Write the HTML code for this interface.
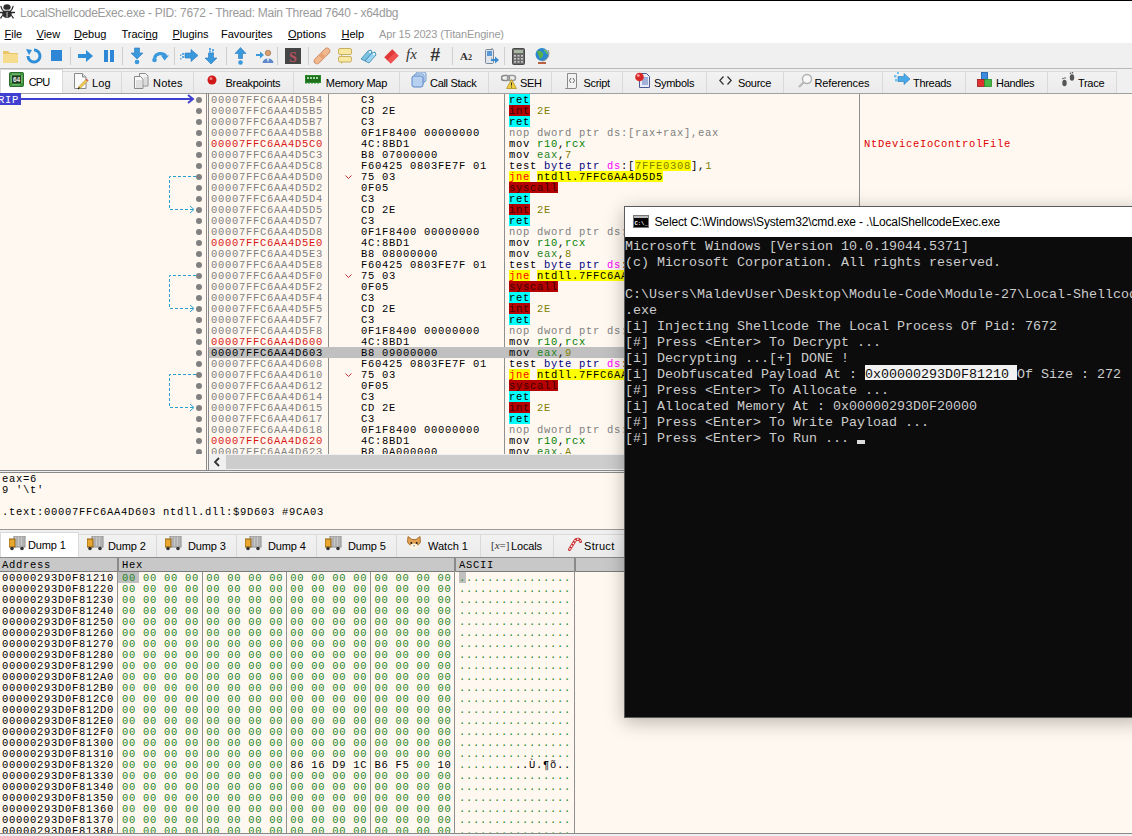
<!DOCTYPE html><html><head><meta charset="utf-8"><style>
*{box-sizing:border-box}
html,body{margin:0;padding:0}
body{width:1132px;height:836px;overflow:hidden;position:relative;background:#f0f0f0;font-family:'Liberation Sans', sans-serif;}
.a{position:absolute}
.m{font-family:'Liberation Mono', monospace;font-size:10.5px;letter-spacing:0.7px;white-space:pre;line-height:11px}
.s{font-family:'Liberation Sans', sans-serif;white-space:pre}
.u{text-decoration:underline}
.tab{position:absolute;top:71px;height:22px;border:1px solid #d9d9d9;border-bottom:none;background:linear-gradient(#f2f2f2,#ebebeb);font-size:11px;line-height:20px;white-space:pre;color:#000}
.tab.sel{top:69px;height:24px;background:#fff;border-color:#d9d9d9}
.tsep{position:absolute;width:1px;background:#ccc}
</style></head><body>
<div class="a" style="left:0;top:0;width:1132px;height:43px;background:#fff"></div>
<div class="a" style="left:0;top:0;width:1132px;height:1px;background:#000"></div>
<svg class="a" style="left:0;top:0" width="16" height="20" viewBox="0 0 16 20">
<g stroke="#2a2a2a" stroke-width="1.3" fill="none" stroke-linecap="round"><path d="M3.5 11 Q1.5 9.5 1 6.5 M10.5 11 Q12.5 9.5 13 6.5 M0.5 12.5 H14.5 M3.5 15 Q1.5 16 0.8 18 M10.5 15 Q12.5 16 13.2 18"/></g>
<g fill="#2e2e2e"><ellipse cx="7" cy="7.2" rx="3.6" ry="3"/><ellipse cx="7" cy="13.8" rx="4.8" ry="4.3"/></g>
<path d="M3.8 10.2 H10.2" stroke="#fff" stroke-width="0.9"/><rect x="6.4" y="12" width="1.3" height="5.6" fill="#a8a8a8"/></svg>
<div class="a s" style="left:20px;top:4px;font-size:12px;line-height:18px;color:#9a9a9a;letter-spacing:-0.27px">LocalShellcodeExec.exe - PID: 7672 - Thread: Main Thread 7640 - x64dbg</div>
<div class="a s" style="left:4.5px;top:27px;font-size:11px;line-height:14px;color:#000"><span class=u>F</span>ile</div>
<div class="a s" style="left:36.5px;top:27px;font-size:11px;line-height:14px;color:#000"><span class=u>V</span>iew</div>
<div class="a s" style="left:74px;top:27px;font-size:11px;line-height:14px;color:#000"><span class=u>D</span>ebug</div>
<div class="a s" style="left:121.5px;top:27px;font-size:11px;line-height:14px;color:#000">Traci<span class=u>n</span>g</div>
<div class="a s" style="left:172.5px;top:27px;font-size:11px;line-height:14px;color:#000"><span class=u>P</span>lugins</div>
<div class="a s" style="left:221px;top:27px;font-size:11px;line-height:14px;color:#000">Favour<span class=u>i</span>tes</div>
<div class="a s" style="left:288px;top:27px;font-size:11px;line-height:14px;color:#000"><span class=u>O</span>ptions</div>
<div class="a s" style="left:341.5px;top:27px;font-size:11px;line-height:14px;color:#000"><span class=u>H</span>elp</div>
<div class="a s" style="left:379px;top:27px;font-size:11px;line-height:14px;color:#9a9a9a;letter-spacing:-0.15px">Apr 15 2023 (TitanEngine)</div>
<div class="a" style="left:0;top:43px;width:1132px;height:25px;background:#f0f0f0"></div>
<div class="a" style="left:0;top:68px;width:1132px;height:1px;background:#b9b9b9"></div>
<div class="a" style="left:70px;top:47px;width:1px;height:18px;background:#cfcfcf"></div>
<div class="a" style="left:122px;top:47px;width:1px;height:18px;background:#cfcfcf"></div>
<div class="a" style="left:174px;top:47px;width:1px;height:18px;background:#cfcfcf"></div>
<div class="a" style="left:226px;top:47px;width:1px;height:18px;background:#cfcfcf"></div>
<div class="a" style="left:277px;top:47px;width:1px;height:18px;background:#cfcfcf"></div>
<div class="a" style="left:308px;top:47px;width:1px;height:18px;background:#cfcfcf"></div>
<div class="a" style="left:452px;top:47px;width:1px;height:18px;background:#cfcfcf"></div>
<div class="a" style="left:504px;top:47px;width:1px;height:18px;background:#cfcfcf"></div>
<svg class="a" style="left:2px;top:47px" width="18" height="18" viewBox="0 0 18 18"><path d="M1 4h5l2 2h8v10H1z" fill="#e8c66a"/><path d="M1 7h15v9H1z" fill="#f6dc8e"/></svg>
<svg class="a" style="left:25px;top:47px" width="18" height="18" viewBox="0 0 18 18"><path d="M9 3a6 6 0 1 1-6 6" stroke="#2e8fd8" stroke-width="3" fill="none"/><path d="M1 2l6 1-3 5z" fill="#2e8fd8"/></svg>
<svg class="a" style="left:49px;top:47px" width="18" height="18" viewBox="0 0 18 18"><rect x="2" y="3" width="11" height="11" fill="#2d86d6"/></svg>
<svg class="a" style="left:77px;top:47px" width="18" height="18" viewBox="0 0 18 18"><path d="M1 7h8V3l7 6-7 6v-4H1z" fill="#2e8fd8"/></svg>
<svg class="a" style="left:102px;top:47px" width="18" height="18" viewBox="0 0 18 18"><rect x="2" y="3" width="4" height="12" fill="#2d86d6"/><rect x="8" y="3" width="4" height="12" fill="#2d86d6"/></svg>
<svg class="a" style="left:130px;top:47px" width="18" height="18" viewBox="0 0 18 18"><path d="M4.5 1h5v5h3.5l-6 6-6-6h3.5z" fill="#3a98dc" stroke="#2a78bc" stroke-width="0.6"/><circle cx="7" cy="15" r="2.3" fill="#3a98dc"/></svg>
<svg class="a" style="left:151px;top:47px" width="18" height="18" viewBox="0 0 18 18"><path d="M3.5 11a6.5 6 0 0 1 11.5-2" stroke="#3a98dc" stroke-width="3.2" fill="none"/><path d="M10 8.5h8l-4.5 5z" fill="#3a98dc"/><circle cx="3.5" cy="13" r="2.3" fill="#3a98dc"/></svg>
<svg class="a" style="left:180px;top:47px" width="18" height="18" viewBox="0 0 18 18"><path d="M5 6h6V2.5l7 6-7 6V11H5z" fill="#3a98dc" stroke="#2a78bc" stroke-width="0.6"/><g fill="#5aa8e4"><rect x="2" y="6" width="2" height="2"/><rect x="2" y="9" width="2" height="2"/><rect x="0" y="7.5" width="1.5" height="1.5"/><rect x="0" y="11" width="1.5" height="1.5"/></g></svg>
<svg class="a" style="left:204px;top:47px" width="16" height="18" viewBox="0 0 16 18"><path d="M4.5 6h5v5h3.5l-6 6-6-6h3.5z" fill="#3a98dc" stroke="#2a78bc" stroke-width="0.6"/><g fill="#5aa8e4"><rect x="5" y="1" width="2" height="2"/><rect x="8" y="2" width="2" height="2"/><rect x="5" y="3.5" width="2" height="2"/><rect x="8" y="4.5" width="1.5" height="1.5"/></g></svg>
<svg class="a" style="left:234px;top:47px" width="14" height="18" viewBox="0 0 14 18"><path d="M4 11h4V6h3.5l-5.5-6-5.5 6H4z" transform="translate(0.5,0.5)" fill="#3a98dc" stroke="#2a78bc" stroke-width="0.6"/><circle cx="6.5" cy="15.5" r="2.3" fill="#3a98dc"/></svg>
<svg class="a" style="left:256px;top:47px" width="18" height="18" viewBox="0 0 18 18"><path d="M0 7h4V4.5l4 3.5-4 3.5V9H0z" fill="#3a98dc"/><circle cx="12" cy="6" r="2.8" fill="#d8a070" stroke="#8a5a30" stroke-width="0.5"/><path d="M6.5 16a5.5 4.5 0 0 1 11 0z" fill="#5a88c8"/><path d="M11 11.5h2l-1 4z" fill="#fff"/></svg>
<svg class="a" style="left:285px;top:48px" width="16" height="16" viewBox="0 0 16 16"><rect x="0" y="0" width="16" height="16" fill="#454545"/><text x="8" y="13.5" font-family="Liberation Serif" font-size="14" font-weight="bold" fill="#b85060" text-anchor="middle">S</text></svg>
<svg class="a" style="left:313px;top:47px" width="18" height="18" viewBox="0 0 18 18"><path d="M4 14L14 4" stroke="#c88a60" stroke-width="6.5" stroke-linecap="round"/><path d="M4 14L14 4" stroke="#f2b890" stroke-width="5" stroke-linecap="round"/><rect x="7" y="7" width="4" height="4" transform="rotate(-45 9 9)" fill="#e8a070"/></svg>
<svg class="a" style="left:337px;top:47px" width="16" height="18" viewBox="0 0 16 18"><rect x="1.5" y="1.5" width="13" height="6" rx="1.5" fill="#f8e8a0" stroke="#c8b060"/><rect x="1.5" y="9.5" width="13" height="5.5" rx="1.5" fill="#f8e8a0" stroke="#c8b060"/><path d="M4 7.5v2l2-2z" fill="#c8b060"/><path d="M4 15v2l2-2z" fill="#c8b060"/></svg>
<svg class="a" style="left:360px;top:47px" width="17" height="18" viewBox="0 0 17 18"><path d="M1 12l7-8 3-1 1 3-7 8z" fill="#7ac0e0" stroke="#3a88b0" stroke-width="0.8"/><path d="M5 14l7-8 3-1 1 3-7 8z" fill="#9ad4f0" stroke="#3a88b0" stroke-width="0.8"/><circle cx="10" cy="5" r="1" fill="#fff"/><circle cx="14" cy="7" r="1" fill="#fff"/></svg>
<svg class="a" style="left:383px;top:47px" width="17" height="18" viewBox="0 0 17 18"><path d="M3 12L11 4" stroke="#e03838" stroke-width="5"/><path d="M6 15L14 7" stroke="#f05050" stroke-width="5"/><path d="M0.5 11.5l3 3-3 0z M3.5 14.5l3 3-3 0z" fill="#f8f0f0"/></svg>
<div class="a" style="left:406px;top:47px;font-family:'Liberation Serif';font-style:italic;font-size:15px;line-height:15px;color:#333">fx</div>
<div class="a" style="left:430px;top:46px;font-family:'Liberation Sans';font-weight:bold;font-style:italic;font-size:18px;line-height:18px;color:#333">#</div>
<div class="a" style="left:460px;top:50px;font-family:'Liberation Serif';font-weight:bold;font-size:11px;line-height:12px;color:#333">A<span style="font-size:8px">2</span></div>
<svg class="a" style="left:484px;top:47px" width="16" height="18" viewBox="0 0 16 18"><rect x="1.5" y="2.5" width="8" height="14" rx="1" fill="#dfe4ea" stroke="#7a8a9a"/><rect x="3" y="4" width="5" height="5" fill="#5a98d8"/><path d="M8 11h-1" stroke="#888"/><path d="M8 1v2" stroke="#7a8a9a"/><path d="M7 12h4v-2.5l4 3.5-4 3.5V14H7z" fill="#3a8ad0"/></svg>
<svg class="a" style="left:512px;top:48px" width="13" height="17" viewBox="0 0 13 17"><rect x="0.5" y="0.5" width="12" height="16" rx="1" fill="#6a6a6a" stroke="#4a4a4a"/><rect x="2" y="2" width="9" height="3" fill="#a8b8a0"/><g fill="#c8c8c8"><rect x="2" y="7" width="2" height="1.6"/><rect x="5.5" y="7" width="2" height="1.6"/><rect x="9" y="7" width="2" height="1.6"/><rect x="2" y="10" width="2" height="1.6"/><rect x="5.5" y="10" width="2" height="1.6"/><rect x="9" y="10" width="2" height="1.6"/><rect x="2" y="13" width="2" height="1.6"/><rect x="5.5" y="13" width="2" height="1.6"/><rect x="9" y="13" width="2" height="1.6"/></g></svg>
<svg class="a" style="left:534px;top:47px" width="16" height="18" viewBox="0 0 16 18"><circle cx="8" cy="7.5" r="6.5" fill="#2a88d0"/><path d="M3 4q3-1 5 1t1 4-3 3" fill="#5ab050"/><path d="M10 3q3 1 3 4" stroke="#6ac060" stroke-width="1.5" fill="none"/><path d="M14 3a7.5 7.5 0 0 1-6 11" stroke="#888" fill="none"/><path d="M4 16h8" stroke="#b86040" stroke-width="2"/></svg>
<div class="a" style="left:0;top:69px;width:1132px;height:24px;background:#f0f0f0"></div>
<div class="tab sel" style="left:0px;width:63px"></div>
<div class="tab" style="left:62px;width:60px"></div>
<div class="tab" style="left:121px;width:73px"></div>
<div class="tab" style="left:193px;width:101px"></div>
<div class="tab" style="left:293px;width:107px"></div>
<div class="tab" style="left:399px;width:90px"></div>
<div class="tab" style="left:488px;width:64px"></div>
<div class="tab" style="left:551px;width:72px"></div>
<div class="tab" style="left:622px;width:85px"></div>
<div class="tab" style="left:706px;width:78px"></div>
<div class="tab" style="left:783px;width:100px"></div>
<div class="tab" style="left:882px;width:84px"></div>
<div class="tab" style="left:965px;width:83px"></div>
<div class="tab" style="left:1047px;width:70px"></div>
<div class="a s" style="left:28.8px;top:75px;font-size:11px;line-height:14px;color:#000;letter-spacing:-0.9px">CPU</div>
<div class="a s" style="left:92px;top:76px;font-size:11px;line-height:14px;color:#000;letter-spacing:0.1px">Log</div>
<div class="a s" style="left:153px;top:76px;font-size:11px;line-height:14px;color:#000;letter-spacing:0.2px">Notes</div>
<div class="a s" style="left:225.5px;top:76px;font-size:11px;line-height:14px;color:#000;letter-spacing:-0.3px">Breakpoints</div>
<div class="a s" style="left:325.8px;top:76px;font-size:11px;line-height:14px;color:#000;letter-spacing:-0.3px">Memory Map</div>
<div class="a s" style="left:430px;top:76px;font-size:11px;line-height:14px;color:#000;letter-spacing:-0.3px">Call Stack</div>
<div class="a s" style="left:520px;top:76px;font-size:11px;line-height:14px;color:#000;letter-spacing:-0.3px">SEH</div>
<div class="a s" style="left:583.5px;top:76px;font-size:11px;line-height:14px;color:#000;letter-spacing:-0.3px">Script</div>
<div class="a s" style="left:654px;top:76px;font-size:11px;line-height:14px;color:#000;letter-spacing:-0.3px">Symbols</div>
<div class="a s" style="left:738px;top:76px;font-size:11px;line-height:14px;color:#000;letter-spacing:-0.3px">Source</div>
<div class="a s" style="left:814.5px;top:76px;font-size:11px;line-height:14px;color:#000;letter-spacing:-0.15px">References</div>
<div class="a s" style="left:913px;top:76px;font-size:11px;line-height:14px;color:#000;letter-spacing:-0.3px">Threads</div>
<div class="a s" style="left:996px;top:76px;font-size:11px;line-height:14px;color:#000;letter-spacing:-0.3px">Handles</div>
<div class="a s" style="left:1078px;top:76px;font-size:11px;line-height:14px;color:#000;letter-spacing:-0.3px">Trace</div>
<svg class="a" style="left:9px;top:72px" width="15" height="15" viewBox="0 0 15 15"><rect x="0.5" y="0.5" width="14" height="14" rx="1" fill="#3c963c" stroke="#2a6a2a"/><g stroke="#bde0bd" stroke-width="0.8"><path d="M4 1.5v1.5M6 1.5v1.5M8 1.5v1.5M10 1.5v1.5M4 12v1.5M6 12v1.5M8 12v1.5M10 12v1.5M1.5 4h1.5M1.5 6h1.5M1.5 8h1.5M1.5 10h1.5M12 4h1.5M12 6h1.5M12 8h1.5M12 10h1.5"/></g><rect x="3" y="3.5" width="9" height="8" fill="#1e3c1e"/><text x="7.5" y="10.3" font-family="Liberation Sans" font-weight="bold" font-size="6.5" fill="#f0f0f0" text-anchor="middle">64</text></svg>
<svg class="a" style="left:74px;top:73px" width="15" height="17" viewBox="0 0 15 17"><path d="M0.5 0.5h8l3.5 3.5v11.5H0.5z" fill="#fafafa" stroke="#8a8a8a"/><path d="M8.5 0.5v3.5h3.5" fill="#e0e0e0" stroke="#8a8a8a"/><path d="M5 15L13 7" stroke="#c89a30" stroke-width="2.6"/><path d="M5 15L13 7" stroke="#f4d860" stroke-width="1.4"/><path d="M12 6l2 2" stroke="#d06060" stroke-width="1.6"/><path d="M4 16l1.5-1.5" stroke="#222" stroke-width="1.2"/></svg>
<svg class="a" style="left:134px;top:73px" width="15" height="16" viewBox="0 0 15 16"><path d="M5.5 0.5h6l2.5 2.5v10H5.5z" fill="#f4f4f4" stroke="#8a8a8a"/><path d="M0.5 3.5h6l2.5 2.5v9.5H0.5z" fill="#f8f8f8" stroke="#8a8a8a"/><path d="M2 8h6M2 10h6M2 12h6M2 14h6M10 5h3M10 7h3M10 9h3M10 11h3" stroke="#b8b8b8" stroke-width="0.8"/></svg>
<svg class="a" style="left:207px;top:75px" width="10" height="10" viewBox="0 0 10 10"><circle cx="5" cy="5" r="4.5" fill="#d01818"/><circle cx="4" cy="3.5" r="1.5" fill="#f08080"/></svg>
<svg class="a" style="left:305px;top:75px" width="16" height="10" viewBox="0 0 16 10"><rect x="0.5" y="0.5" width="15" height="7" fill="#1e6e1e" stroke="#2a8a2a"/><g fill="#9ed89e"><rect x="2" y="2" width="2" height="2"/><rect x="5" y="2" width="2" height="2"/><rect x="8" y="2" width="2" height="2"/><rect x="11" y="2" width="2" height="2"/></g><path d="M1 8v1M4 8v1M7 8v1M10 8v1M13 8v1" stroke="#2a8a2a"/></svg>
<svg class="a" style="left:411px;top:72px" width="16" height="16" viewBox="0 0 16 16"><rect x="5" y="0" width="10" height="10" rx="2" fill="#cfe0f4" stroke="#7aa0d0"/><rect x="3" y="2" width="10" height="10" rx="2" fill="#cfe0f4" stroke="#7aa0d0"/><rect x="1" y="4" width="11" height="11" rx="2" fill="#b8d0f0" stroke="#5a88c8"/></svg>
<svg class="a" style="left:501px;top:74px" width="17" height="16" viewBox="0 0 17 16"><rect x="0.5" y="1.5" width="8" height="5" rx="2.5" fill="none" stroke="#8a8a8a" stroke-width="1.6"/><rect x="6.5" y="1.5" width="8" height="5" rx="2.5" fill="none" stroke="#9a9a9a" stroke-width="1.6"/><path d="M10.5 5.5l5 9h-10z" fill="#f0d040" stroke="#b09020" stroke-width="0.8"/><path d="M10.5 8.5v3M10.5 12.5v1" stroke="#333" stroke-width="1"/></svg>
<svg class="a" style="left:565px;top:73px" width="13" height="16" viewBox="0 0 13 16"><path d="M2.5 0.5h9v13.5a1.5 1.5 0 0 1-1.5 1.5H0.5a1.5 1.5 0 0 0 2-1.5z" fill="#f2f2f2" stroke="#8a8a8a"/><path d="M6 5L4.5 7.5L6 10M8 5L9.5 7.5L8 10" stroke="#555" stroke-width="0.9" fill="none"/></svg>
<svg class="a" style="left:635px;top:72px" width="16" height="17" viewBox="0 0 16 17"><path d="M4.5 1.5h7l3 3v11h-10z" fill="#e8ecf8" stroke="#4a5a90"/><path d="M7 6h6M7 8h6M7 10h6M7 12h6" stroke="#4a6ab0" stroke-width="0.9"/><circle cx="4.5" cy="5" r="4.3" fill="#d82828"/><circle cx="3.3" cy="3.6" r="1.4" fill="#f8a0a0"/></svg>
<svg class="a" style="left:719px;top:76px" width="13" height="9" viewBox="0 0 13 9"><path d="M4.5 0.5L0.8 4.5L4.5 8.5M8.5 0.5L12.2 4.5L8.5 8.5" stroke="#333" stroke-width="1.3" fill="none"/></svg>
<svg class="a" style="left:797px;top:73px" width="16" height="16" viewBox="0 0 16 16"><circle cx="10" cy="6" r="4.5" fill="#f8f8f8" stroke="#b0b0b0" stroke-width="1.4"/><path d="M7 9l-5 5" stroke="#b8b8b8" stroke-width="2.2"/></svg>
<svg class="a" style="left:894px;top:72px" width="17" height="14" viewBox="0 0 17 14"><path d="M4 4.5h6V1.5l6 5.5-6 5.5V9.5H4z" fill="#48a8e8" stroke="#2a78b8" stroke-width="0.6"/><g fill="#70c0f0"><rect x="0" y="3" width="2.5" height="2.5"/><rect x="1" y="7" width="2.5" height="2.5"/><rect x="3" y="0" width="2" height="2"/></g></svg>
<svg class="a" style="left:977px;top:72px" width="15" height="15" viewBox="0 0 15 15"><rect x="4.5" y="0.5" width="6" height="7" fill="#3a8ae0" stroke="#1a5aa0" stroke-width="0.8"/><rect x="0.5" y="7.5" width="7" height="7" fill="#e03030" stroke="#a01818" stroke-width="0.8"/><rect x="7.5" y="7.5" width="7" height="7" fill="#48b848" stroke="#288a28" stroke-width="0.8"/></svg>
<svg class="a" style="left:1061px;top:72px" width="15" height="16" viewBox="0 0 15 16"><ellipse cx="3.5" cy="11" rx="2.2" ry="3.2" fill="#555"/><ellipse cx="11" cy="5.5" rx="2.2" ry="3.2" fill="#555"/><g fill="#555"><circle cx="2" cy="6.5" r="0.8"/><circle cx="4" cy="6" r="0.8"/><circle cx="9.5" cy="1.2" r="0.8"/><circle cx="11.5" cy="0.8" r="0.8"/></g></svg>
<div class="a" style="left:0;top:93px;width:1132px;height:378px;background:#fff8f0"></div>
<div class="a" style="left:0;top:93px;width:1132px;height:1px;background:#a0a0a0"></div>
<div class="a" style="left:206px;top:93px;width:1px;height:378px;background:#8a8a8a"></div>
<div class="a" style="left:208px;top:93px;width:1px;height:378px;background:#8a8a8a"></div>
<div class="a" style="left:328px;top:94px;width:1px;height:360px;background:#8f8f8f"></div>
<div class="a" style="left:504px;top:94px;width:1px;height:360px;background:#8f8f8f"></div>
<div class="a" style="left:859px;top:94px;width:1px;height:360px;background:#8f8f8f"></div>
<div class="a" style="left:0;top:94px;width:1132px;height:360px;overflow:hidden">
<div class="a m" style="left:211px;top:1px;color:#808080">00007FFC6AA4D5B4</div>
<div class="a m" style="left:361px;top:1px;color:#000">C3</div>
<div class="a m" style="left:509px;top:1px"><span style="color:#000;background:#00ffff;display:inline-block;height:11px;vertical-align:top;position:relative;top:-1px;padding-top:1px">ret</span></div>
<div class="a" style="left:196px;top:2.5px;width:6px;height:6px;border-radius:50%;background:#808080"></div>
<div class="a m" style="left:211px;top:12px;color:#808080">00007FFC6AA4D5B5</div>
<div class="a m" style="left:361px;top:12px;color:#000">CD 2E</div>
<div class="a m" style="left:509px;top:12px"><span style="color:#400000;background:#b40000;display:inline-block;height:11px;vertical-align:top;position:relative;top:-1px;padding-top:1px">int</span><span style="color:#808000"> 2E</span></div>
<div class="a" style="left:196px;top:13.5px;width:6px;height:6px;border-radius:50%;background:#808080"></div>
<div class="a m" style="left:211px;top:23px;color:#808080">00007FFC6AA4D5B7</div>
<div class="a m" style="left:361px;top:23px;color:#000">C3</div>
<div class="a m" style="left:509px;top:23px"><span style="color:#000;background:#00ffff;display:inline-block;height:11px;vertical-align:top;position:relative;top:-1px;padding-top:1px">ret</span></div>
<div class="a" style="left:196px;top:24.5px;width:6px;height:6px;border-radius:50%;background:#808080"></div>
<div class="a m" style="left:211px;top:34px;color:#808080">00007FFC6AA4D5B8</div>
<div class="a m" style="left:361px;top:34px;color:#000">0F1F8400 00000000</div>
<div class="a m" style="left:509px;top:34px"><span style="color:#808080">nop dword ptr ds:[rax+rax],eax</span></div>
<div class="a" style="left:196px;top:35.5px;width:6px;height:6px;border-radius:50%;background:#808080"></div>
<div class="a m" style="left:211px;top:45px;color:#d81818">00007FFC6AA4D5C0</div>
<div class="a m" style="left:361px;top:45px;color:#000">4C:8BD1</div>
<div class="a m" style="left:509px;top:45px"><span style="color:#000">mov </span><span style="color:#008000">r10</span><span style="color:#000">,</span><span style="color:#008000">rcx</span></div>
<div class="a" style="left:196px;top:46.5px;width:6px;height:6px;border-radius:50%;background:#808080"></div>
<div class="a m" style="left:211px;top:56px;color:#808080">00007FFC6AA4D5C3</div>
<div class="a m" style="left:361px;top:56px;color:#000">B8 07000000</div>
<div class="a m" style="left:509px;top:56px"><span style="color:#000">mov </span><span style="color:#1f851f">eax</span><span style="color:#000">,</span><span style="color:#808000">7</span></div>
<div class="a" style="left:196px;top:57.5px;width:6px;height:6px;border-radius:50%;background:#808080"></div>
<div class="a m" style="left:211px;top:67px;color:#808080">00007FFC6AA4D5C8</div>
<div class="a m" style="left:361px;top:67px;color:#000">F60425 0803FE7F 01</div>
<div class="a m" style="left:509px;top:67px"><span style="color:#000">test </span><span style="color:#000080">byte ptr </span><span style="color:#ff00ff">ds</span><span style="color:#000">:</span><span style="color:#000">[</span><span style="color:#808000;background:#ffff00;display:inline-block;height:11px;vertical-align:top;position:relative;top:-1px;padding-top:1px">7FFE0308</span><span style="color:#000">]</span><span style="color:#000">,</span><span style="color:#808000">1</span></div>
<div class="a" style="left:196px;top:68.5px;width:6px;height:6px;border-radius:50%;background:#808080"></div>
<div class="a m" style="left:211px;top:78px;color:#808080">00007FFC6AA4D5D0</div>
<div class="a m" style="left:361px;top:78px;color:#000">75 03</div>
<svg class="a" style="left:345px;top:81px" width="7" height="5"><path d="M0.5 0.5 L3.5 3.5 L6.5 0.5" stroke="#c03030" fill="none"/></svg>
<div class="a m" style="left:509px;top:78px"><span style="color:#ff0000;background:#ffff00;display:inline-block;height:11px;vertical-align:top;position:relative;top:-1px;padding-top:1px">jne</span> <span style="color:#000;background:#ffff00;display:inline-block;height:11px;vertical-align:top;position:relative;top:-1px;padding-top:1px">ntdll.7FFC6AA4D5D5</span></div>
<div class="a" style="left:196px;top:79.5px;width:6px;height:6px;border-radius:50%;background:#808080"></div>
<div class="a m" style="left:211px;top:89px;color:#808080">00007FFC6AA4D5D2</div>
<div class="a m" style="left:361px;top:89px;color:#000">0F05</div>
<div class="a m" style="left:509px;top:89px"><span style="color:#400000;background:#b40000;display:inline-block;height:11px;vertical-align:top;position:relative;top:-1px;padding-top:1px">syscall</span></div>
<div class="a" style="left:196px;top:90.5px;width:6px;height:6px;border-radius:50%;background:#808080"></div>
<div class="a m" style="left:211px;top:100px;color:#808080">00007FFC6AA4D5D4</div>
<div class="a m" style="left:361px;top:100px;color:#000">C3</div>
<div class="a m" style="left:509px;top:100px"><span style="color:#000;background:#00ffff;display:inline-block;height:11px;vertical-align:top;position:relative;top:-1px;padding-top:1px">ret</span></div>
<div class="a" style="left:196px;top:101.5px;width:6px;height:6px;border-radius:50%;background:#808080"></div>
<div class="a m" style="left:211px;top:111px;color:#808080">00007FFC6AA4D5D5</div>
<div class="a m" style="left:361px;top:111px;color:#000">CD 2E</div>
<div class="a m" style="left:509px;top:111px"><span style="color:#400000;background:#b40000;display:inline-block;height:11px;vertical-align:top;position:relative;top:-1px;padding-top:1px">int</span><span style="color:#808000"> 2E</span></div>
<div class="a" style="left:196px;top:112.5px;width:6px;height:6px;border-radius:50%;background:#808080"></div>
<div class="a m" style="left:211px;top:122px;color:#808080">00007FFC6AA4D5D7</div>
<div class="a m" style="left:361px;top:122px;color:#000">C3</div>
<div class="a m" style="left:509px;top:122px"><span style="color:#000;background:#00ffff;display:inline-block;height:11px;vertical-align:top;position:relative;top:-1px;padding-top:1px">ret</span></div>
<div class="a" style="left:196px;top:123.5px;width:6px;height:6px;border-radius:50%;background:#808080"></div>
<div class="a m" style="left:211px;top:133px;color:#808080">00007FFC6AA4D5D8</div>
<div class="a m" style="left:361px;top:133px;color:#000">0F1F8400 00000000</div>
<div class="a m" style="left:509px;top:133px"><span style="color:#808080">nop dword ptr ds:[rax+rax],eax</span></div>
<div class="a" style="left:196px;top:134.5px;width:6px;height:6px;border-radius:50%;background:#808080"></div>
<div class="a m" style="left:211px;top:144px;color:#d81818">00007FFC6AA4D5E0</div>
<div class="a m" style="left:361px;top:144px;color:#000">4C:8BD1</div>
<div class="a m" style="left:509px;top:144px"><span style="color:#000">mov </span><span style="color:#008000">r10</span><span style="color:#000">,</span><span style="color:#008000">rcx</span></div>
<div class="a" style="left:196px;top:145.5px;width:6px;height:6px;border-radius:50%;background:#808080"></div>
<div class="a m" style="left:211px;top:155px;color:#808080">00007FFC6AA4D5E3</div>
<div class="a m" style="left:361px;top:155px;color:#000">B8 08000000</div>
<div class="a m" style="left:509px;top:155px"><span style="color:#000">mov </span><span style="color:#1f851f">eax</span><span style="color:#000">,</span><span style="color:#808000">8</span></div>
<div class="a" style="left:196px;top:156.5px;width:6px;height:6px;border-radius:50%;background:#808080"></div>
<div class="a m" style="left:211px;top:166px;color:#808080">00007FFC6AA4D5E8</div>
<div class="a m" style="left:361px;top:166px;color:#000">F60425 0803FE7F 01</div>
<div class="a m" style="left:509px;top:166px"><span style="color:#000">test </span><span style="color:#000080">byte ptr </span><span style="color:#ff00ff">ds</span><span style="color:#000">:</span><span style="color:#000">[</span><span style="color:#808000;background:#ffff00;display:inline-block;height:11px;vertical-align:top;position:relative;top:-1px;padding-top:1px">7FFE0308</span><span style="color:#000">]</span><span style="color:#000">,</span><span style="color:#808000">1</span></div>
<div class="a" style="left:196px;top:167.5px;width:6px;height:6px;border-radius:50%;background:#808080"></div>
<div class="a m" style="left:211px;top:177px;color:#808080">00007FFC6AA4D5F0</div>
<div class="a m" style="left:361px;top:177px;color:#000">75 03</div>
<svg class="a" style="left:345px;top:180px" width="7" height="5"><path d="M0.5 0.5 L3.5 3.5 L6.5 0.5" stroke="#c03030" fill="none"/></svg>
<div class="a m" style="left:509px;top:177px"><span style="color:#ff0000;background:#ffff00;display:inline-block;height:11px;vertical-align:top;position:relative;top:-1px;padding-top:1px">jne</span> <span style="color:#000;background:#ffff00;display:inline-block;height:11px;vertical-align:top;position:relative;top:-1px;padding-top:1px">ntdll.7FFC6AA4D5F5</span></div>
<div class="a" style="left:196px;top:178.5px;width:6px;height:6px;border-radius:50%;background:#808080"></div>
<div class="a m" style="left:211px;top:188px;color:#808080">00007FFC6AA4D5F2</div>
<div class="a m" style="left:361px;top:188px;color:#000">0F05</div>
<div class="a m" style="left:509px;top:188px"><span style="color:#400000;background:#b40000;display:inline-block;height:11px;vertical-align:top;position:relative;top:-1px;padding-top:1px">syscall</span></div>
<div class="a" style="left:196px;top:189.5px;width:6px;height:6px;border-radius:50%;background:#808080"></div>
<div class="a m" style="left:211px;top:199px;color:#808080">00007FFC6AA4D5F4</div>
<div class="a m" style="left:361px;top:199px;color:#000">C3</div>
<div class="a m" style="left:509px;top:199px"><span style="color:#000;background:#00ffff;display:inline-block;height:11px;vertical-align:top;position:relative;top:-1px;padding-top:1px">ret</span></div>
<div class="a" style="left:196px;top:200.5px;width:6px;height:6px;border-radius:50%;background:#808080"></div>
<div class="a m" style="left:211px;top:210px;color:#808080">00007FFC6AA4D5F5</div>
<div class="a m" style="left:361px;top:210px;color:#000">CD 2E</div>
<div class="a m" style="left:509px;top:210px"><span style="color:#400000;background:#b40000;display:inline-block;height:11px;vertical-align:top;position:relative;top:-1px;padding-top:1px">int</span><span style="color:#808000"> 2E</span></div>
<div class="a" style="left:196px;top:211.5px;width:6px;height:6px;border-radius:50%;background:#808080"></div>
<div class="a m" style="left:211px;top:221px;color:#808080">00007FFC6AA4D5F7</div>
<div class="a m" style="left:361px;top:221px;color:#000">C3</div>
<div class="a m" style="left:509px;top:221px"><span style="color:#000;background:#00ffff;display:inline-block;height:11px;vertical-align:top;position:relative;top:-1px;padding-top:1px">ret</span></div>
<div class="a" style="left:196px;top:222.5px;width:6px;height:6px;border-radius:50%;background:#808080"></div>
<div class="a m" style="left:211px;top:232px;color:#808080">00007FFC6AA4D5F8</div>
<div class="a m" style="left:361px;top:232px;color:#000">0F1F8400 00000000</div>
<div class="a m" style="left:509px;top:232px"><span style="color:#808080">nop dword ptr ds:[rax+rax],eax</span></div>
<div class="a" style="left:196px;top:233.5px;width:6px;height:6px;border-radius:50%;background:#808080"></div>
<div class="a m" style="left:211px;top:243px;color:#d81818">00007FFC6AA4D600</div>
<div class="a m" style="left:361px;top:243px;color:#000">4C:8BD1</div>
<div class="a m" style="left:509px;top:243px"><span style="color:#000">mov </span><span style="color:#008000">r10</span><span style="color:#000">,</span><span style="color:#008000">rcx</span></div>
<div class="a" style="left:196px;top:244.5px;width:6px;height:6px;border-radius:50%;background:#808080"></div>
<div class="a" style="left:209px;top:253px;width:923px;height:11px;background:#c0c0c0"></div>
<div class="a" style="left:329px;top:253px;width:0px;height:11px;background:#8f8f8f"></div>
<div class="a m" style="left:211px;top:254px;color:#000">00007FFC6AA4D603</div>
<div class="a m" style="left:361px;top:254px;color:#000">B8 09000000</div>
<div class="a m" style="left:509px;top:254px"><span style="color:#000">mov </span><span style="color:#1f851f">eax</span><span style="color:#000">,</span><span style="color:#808000">9</span></div>
<div class="a" style="left:196px;top:255.5px;width:6px;height:6px;border-radius:50%;background:#808080"></div>
<div class="a m" style="left:211px;top:265px;color:#808080">00007FFC6AA4D608</div>
<div class="a m" style="left:361px;top:265px;color:#000">F60425 0803FE7F 01</div>
<div class="a m" style="left:509px;top:265px"><span style="color:#000">test </span><span style="color:#000080">byte ptr </span><span style="color:#ff00ff">ds</span><span style="color:#000">:</span><span style="color:#000">[</span><span style="color:#808000;background:#ffff00;display:inline-block;height:11px;vertical-align:top;position:relative;top:-1px;padding-top:1px">7FFE0308</span><span style="color:#000">]</span><span style="color:#000">,</span><span style="color:#808000">1</span></div>
<div class="a" style="left:196px;top:266.5px;width:6px;height:6px;border-radius:50%;background:#808080"></div>
<div class="a m" style="left:211px;top:276px;color:#808080">00007FFC6AA4D610</div>
<div class="a m" style="left:361px;top:276px;color:#000">75 03</div>
<svg class="a" style="left:345px;top:279px" width="7" height="5"><path d="M0.5 0.5 L3.5 3.5 L6.5 0.5" stroke="#c03030" fill="none"/></svg>
<div class="a m" style="left:509px;top:276px"><span style="color:#ff0000;background:#ffff00;display:inline-block;height:11px;vertical-align:top;position:relative;top:-1px;padding-top:1px">jne</span> <span style="color:#000;background:#ffff00;display:inline-block;height:11px;vertical-align:top;position:relative;top:-1px;padding-top:1px">ntdll.7FFC6AA4D615</span></div>
<div class="a" style="left:196px;top:277.5px;width:6px;height:6px;border-radius:50%;background:#808080"></div>
<div class="a m" style="left:211px;top:287px;color:#808080">00007FFC6AA4D612</div>
<div class="a m" style="left:361px;top:287px;color:#000">0F05</div>
<div class="a m" style="left:509px;top:287px"><span style="color:#400000;background:#b40000;display:inline-block;height:11px;vertical-align:top;position:relative;top:-1px;padding-top:1px">syscall</span></div>
<div class="a" style="left:196px;top:288.5px;width:6px;height:6px;border-radius:50%;background:#808080"></div>
<div class="a m" style="left:211px;top:298px;color:#808080">00007FFC6AA4D614</div>
<div class="a m" style="left:361px;top:298px;color:#000">C3</div>
<div class="a m" style="left:509px;top:298px"><span style="color:#000;background:#00ffff;display:inline-block;height:11px;vertical-align:top;position:relative;top:-1px;padding-top:1px">ret</span></div>
<div class="a" style="left:196px;top:299.5px;width:6px;height:6px;border-radius:50%;background:#808080"></div>
<div class="a m" style="left:211px;top:309px;color:#808080">00007FFC6AA4D615</div>
<div class="a m" style="left:361px;top:309px;color:#000">CD 2E</div>
<div class="a m" style="left:509px;top:309px"><span style="color:#400000;background:#b40000;display:inline-block;height:11px;vertical-align:top;position:relative;top:-1px;padding-top:1px">int</span><span style="color:#808000"> 2E</span></div>
<div class="a" style="left:196px;top:310.5px;width:6px;height:6px;border-radius:50%;background:#808080"></div>
<div class="a m" style="left:211px;top:320px;color:#808080">00007FFC6AA4D617</div>
<div class="a m" style="left:361px;top:320px;color:#000">C3</div>
<div class="a m" style="left:509px;top:320px"><span style="color:#000;background:#00ffff;display:inline-block;height:11px;vertical-align:top;position:relative;top:-1px;padding-top:1px">ret</span></div>
<div class="a" style="left:196px;top:321.5px;width:6px;height:6px;border-radius:50%;background:#808080"></div>
<div class="a m" style="left:211px;top:331px;color:#808080">00007FFC6AA4D618</div>
<div class="a m" style="left:361px;top:331px;color:#000">0F1F8400 00000000</div>
<div class="a m" style="left:509px;top:331px"><span style="color:#808080">nop dword ptr ds:[rax+rax],eax</span></div>
<div class="a" style="left:196px;top:332.5px;width:6px;height:6px;border-radius:50%;background:#808080"></div>
<div class="a m" style="left:211px;top:342px;color:#d81818">00007FFC6AA4D620</div>
<div class="a m" style="left:361px;top:342px;color:#000">4C:8BD1</div>
<div class="a m" style="left:509px;top:342px"><span style="color:#000">mov </span><span style="color:#008000">r10</span><span style="color:#000">,</span><span style="color:#008000">rcx</span></div>
<div class="a" style="left:196px;top:343.5px;width:6px;height:6px;border-radius:50%;background:#808080"></div>
<div class="a m" style="left:211px;top:353px;color:#808080">00007FFC6AA4D623</div>
<div class="a m" style="left:361px;top:353px;color:#000">B8 0A000000</div>
<div class="a m" style="left:509px;top:353px"><span style="color:#000">mov </span><span style="color:#1f851f">eax</span><span style="color:#000">,</span><span style="color:#808000">A</span></div>
<div class="a" style="left:196px;top:354.5px;width:6px;height:6px;border-radius:50%;background:#808080"></div>
</div>
<div class="a m" style="left:864px;top:139px;color:#e00000">NtDeviceIoControlFile</div>
<div class="a" style="left:0;top:93px;width:21px;height:12px;background:#4040d0"></div>
<div class="a" style="left:21px;top:94px;width:172px;height:4px;background:#fff"></div>
<div class="a m" style="left:-2px;top:95px;color:#fff;width:23px;overflow:hidden">RIP</div>
<div class="a" style="left:21px;top:98px;width:172px;height:2px;background:#4040d0"></div>
<svg class="a" style="left:186px;top:94px" width="10" height="10"><path d="M2 1 L7 5 L2 9" stroke="#4040d0" stroke-width="2" fill="none"/></svg>
<svg class="a" style="left:165px;top:176px" width="32" height="39"><path d="M31 0.5 H4.5 V33.5 H30" stroke="#2aa0d0" stroke-dasharray="3,2" fill="none"/><path d="M25 30 L29 33.5 L25 37" stroke="#2aa0d0" fill="none"/></svg>
<svg class="a" style="left:165px;top:275px" width="32" height="39"><path d="M31 0.5 H4.5 V33.5 H30" stroke="#2aa0d0" stroke-dasharray="3,2" fill="none"/><path d="M25 30 L29 33.5 L25 37" stroke="#2aa0d0" fill="none"/></svg>
<svg class="a" style="left:165px;top:374px" width="32" height="39"><path d="M31 0.5 H4.5 V33.5 H30" stroke="#2aa0d0" stroke-dasharray="3,2" fill="none"/><path d="M25 30 L29 33.5 L25 37" stroke="#2aa0d0" fill="none"/></svg>
<div class="a" style="left:209px;top:454px;width:923px;height:16px;background:#f0f0f0"></div>
<div class="a" style="left:226px;top:455px;width:906px;height:14px;background:#cdcdcd"></div>
<svg class="a" style="left:211px;top:456px" width="12" height="12"><path d="M8 2 L4 6 L8 10" stroke="#333" stroke-width="1.8" fill="none"/></svg>
<div class="a" style="left:0;top:470px;width:1132px;height:1px;background:#8a8a8a"></div>
<div class="a" style="left:0;top:471px;width:1132px;height:61px;background:#f0f0f0"></div>
<div class="a" style="left:0;top:472px;width:1132px;height:58px;background:#fff8f0;border-top:1px solid #8a8a8a;border-bottom:1px solid #9a9a9a"></div>
<div class="a m" style="left:2px;top:474px;color:#000">eax=6
9 '\t'

.text:00007FFC6AA4D603 ntdll.dll:$9D603 #9CA03</div>
<div class="a" style="left:0;top:531px;width:1132px;height:26px;background:#f0f0f0"></div>
<div class="a" style="left:0px;top:532px;width:79px;height:25px;background:#fff;border:1px solid #d9d9d9;border-bottom:none"></div>
<div class="a s" style="left:28px;top:538px;font-size:11px;line-height:14px;color:#000;letter-spacing:-0.15px">Dump 1</div>
<svg class="a" style="left:9px;top:536px" width="17" height="15" viewBox="0 0 17 15"><rect x="5" y="0" width="11" height="11" fill="#c8c8c8" stroke="#888"/><path d="M8 1v9M11 1v9M14 1v9" stroke="#999"/><rect x="0" y="3" width="6" height="8" fill="#e8a830" stroke="#906010"/><circle cx="3" cy="12.5" r="1.8" fill="#333"/><circle cx="13" cy="12.5" r="1.8" fill="#333"/></svg>
<div class="a" style="left:78px;top:534px;width:79px;height:23px;background:linear-gradient(#f2f2f2,#ebebeb);border:1px solid #d9d9d9;border-bottom:none"></div>
<div class="a s" style="left:108px;top:539px;font-size:11px;line-height:14px;color:#000;letter-spacing:-0.15px">Dump 2</div>
<svg class="a" style="left:87px;top:536px" width="17" height="15" viewBox="0 0 17 15"><rect x="5" y="0" width="11" height="11" fill="#c8c8c8" stroke="#888"/><path d="M8 1v9M11 1v9M14 1v9" stroke="#999"/><rect x="0" y="3" width="6" height="8" fill="#e8a830" stroke="#906010"/><circle cx="3" cy="12.5" r="1.8" fill="#333"/><circle cx="13" cy="12.5" r="1.8" fill="#333"/></svg>
<div class="a" style="left:156px;top:534px;width:81px;height:23px;background:linear-gradient(#f2f2f2,#ebebeb);border:1px solid #d9d9d9;border-bottom:none"></div>
<div class="a s" style="left:188px;top:539px;font-size:11px;line-height:14px;color:#000;letter-spacing:-0.15px">Dump 3</div>
<svg class="a" style="left:165px;top:536px" width="17" height="15" viewBox="0 0 17 15"><rect x="5" y="0" width="11" height="11" fill="#c8c8c8" stroke="#888"/><path d="M8 1v9M11 1v9M14 1v9" stroke="#999"/><rect x="0" y="3" width="6" height="8" fill="#e8a830" stroke="#906010"/><circle cx="3" cy="12.5" r="1.8" fill="#333"/><circle cx="13" cy="12.5" r="1.8" fill="#333"/></svg>
<div class="a" style="left:236px;top:534px;width:81px;height:23px;background:linear-gradient(#f2f2f2,#ebebeb);border:1px solid #d9d9d9;border-bottom:none"></div>
<div class="a s" style="left:268px;top:539px;font-size:11px;line-height:14px;color:#000;letter-spacing:-0.15px">Dump 4</div>
<svg class="a" style="left:245px;top:536px" width="17" height="15" viewBox="0 0 17 15"><rect x="5" y="0" width="11" height="11" fill="#c8c8c8" stroke="#888"/><path d="M8 1v9M11 1v9M14 1v9" stroke="#999"/><rect x="0" y="3" width="6" height="8" fill="#e8a830" stroke="#906010"/><circle cx="3" cy="12.5" r="1.8" fill="#333"/><circle cx="13" cy="12.5" r="1.8" fill="#333"/></svg>
<div class="a" style="left:316px;top:534px;width:81px;height:23px;background:linear-gradient(#f2f2f2,#ebebeb);border:1px solid #d9d9d9;border-bottom:none"></div>
<div class="a s" style="left:348px;top:539px;font-size:11px;line-height:14px;color:#000;letter-spacing:-0.15px">Dump 5</div>
<svg class="a" style="left:325px;top:536px" width="17" height="15" viewBox="0 0 17 15"><rect x="5" y="0" width="11" height="11" fill="#c8c8c8" stroke="#888"/><path d="M8 1v9M11 1v9M14 1v9" stroke="#999"/><rect x="0" y="3" width="6" height="8" fill="#e8a830" stroke="#906010"/><circle cx="3" cy="12.5" r="1.8" fill="#333"/><circle cx="13" cy="12.5" r="1.8" fill="#333"/></svg>
<div class="a" style="left:396px;top:534px;width:85px;height:23px;background:linear-gradient(#f2f2f2,#ebebeb);border:1px solid #d9d9d9;border-bottom:none"></div>
<div class="a s" style="left:428px;top:539px;font-size:11px;line-height:14px;color:#000;letter-spacing:0px">Watch 1</div>
<div class="a" style="left:480px;top:534px;width:74px;height:23px;background:linear-gradient(#f2f2f2,#ebebeb);border:1px solid #d9d9d9;border-bottom:none"></div>
<div class="a s" style="left:511px;top:539px;font-size:11px;line-height:14px;color:#000;letter-spacing:-0.15px">Locals</div>
<div class="a" style="left:553px;top:534px;width:88px;height:23px;background:linear-gradient(#f2f2f2,#ebebeb);border:1px solid #d9d9d9;border-bottom:none"></div>
<div class="a s" style="left:584px;top:539px;font-size:11px;line-height:14px;color:#000;letter-spacing:0.3px">Struct</div>
<svg class="a" style="left:406px;top:536px" width="16" height="15" viewBox="0 0 16 15"><path d="M1.5 6L2 0.5 6 3.5h4L14 0.5 14.5 6A7 6.5 0 0 1 1.5 6z" fill="#e0a050" stroke="#9a6020" stroke-width="0.8"/><ellipse cx="8" cy="10.5" rx="3.8" ry="3" fill="#fff4e0"/><circle cx="5.3" cy="7" r="1" fill="#222"/><circle cx="10.7" cy="7" r="1" fill="#222"/><path d="M7 9.5h2l-1 1z" fill="#333"/></svg>
<div class="a" style="left:491px;top:538px;font-family:'Liberation Serif';font-size:11px;line-height:14px;color:#333;white-space:pre">[<i>x</i>=]</div>
<svg class="a" style="left:567px;top:535px" width="15" height="16" viewBox="0 0 15 16"><path d="M2.5 14.5L8.5 5A3 3 0 0 1 13.5 6.5" stroke="#c83030" stroke-width="3" fill="none" stroke-linecap="round"/><path d="M2.5 14.5L8.5 5A3 3 0 0 1 13.5 6.5" stroke="#fff" stroke-width="1.3" stroke-dasharray="1.6,1.6" fill="none"/></svg>
<div class="a" style="left:0;top:557px;width:1132px;height:277px;background:#fff8f0"></div>
<div class="a" style="left:0;top:557px;width:1132px;height:15px;background:#c8c8c8;border-top:1px solid #8a8a8a;border-bottom:1px solid #7a7a7a"></div>
<div class="a" style="left:117px;top:557px;width:2px;height:15px;background:#8a8a8a"></div>
<div class="a" style="left:117px;top:572px;width:1px;height:262px;background:#8f8f8f"></div>
<div class="a" style="left:454px;top:557px;width:2px;height:15px;background:#8a8a8a"></div>
<div class="a" style="left:454px;top:572px;width:1px;height:262px;background:#8f8f8f"></div>
<div class="a" style="left:574px;top:557px;width:2px;height:15px;background:#8a8a8a"></div>
<div class="a" style="left:574px;top:572px;width:1px;height:262px;background:#8f8f8f"></div>
<div class="a" style="left:202px;top:572px;width:1px;height:262px;background:#8f8f8f"></div>
<div class="a" style="left:286px;top:572px;width:1px;height:262px;background:#8f8f8f"></div>
<div class="a" style="left:370px;top:572px;width:1px;height:262px;background:#8f8f8f"></div>
<div class="a m" style="left:2px;top:560px;color:#000">Address</div>
<div class="a m" style="left:122px;top:560px;color:#000">Hex</div>
<div class="a m" style="left:459px;top:560px;color:#000">ASCII</div>
<div class="a" style="left:118px;top:572px;width:21px;height:11px;background:#c0c0c0"></div>
<div class="a" style="left:459px;top:572px;width:7px;height:11px;background:#c0c0c0"></div>
<div class="a m" style="left:2px;top:573px;color:#000">00000293D0F81210</div>
<div class="a m" style="left:122px;top:573px;word-spacing:0"><span style="color:#1f851f">00</span> <span style="color:#1f851f">00</span> <span style="color:#1f851f">00</span> <span style="color:#1f851f">00</span> <span style="color:#1f851f">00</span> <span style="color:#1f851f">00</span> <span style="color:#1f851f">00</span> <span style="color:#1f851f">00</span> <span style="color:#1f851f">00</span> <span style="color:#1f851f">00</span> <span style="color:#1f851f">00</span> <span style="color:#1f851f">00</span> <span style="color:#1f851f">00</span> <span style="color:#1f851f">00</span> <span style="color:#1f851f">00</span> <span style="color:#1f851f">00</span></div>
<div class="a m" style="left:459px;top:573px"><span style="color:#1f851f">................</span></div>
<div class="a m" style="left:2px;top:584px;color:#000">00000293D0F81220</div>
<div class="a m" style="left:122px;top:584px;word-spacing:0"><span style="color:#1f851f">00</span> <span style="color:#1f851f">00</span> <span style="color:#1f851f">00</span> <span style="color:#1f851f">00</span> <span style="color:#1f851f">00</span> <span style="color:#1f851f">00</span> <span style="color:#1f851f">00</span> <span style="color:#1f851f">00</span> <span style="color:#1f851f">00</span> <span style="color:#1f851f">00</span> <span style="color:#1f851f">00</span> <span style="color:#1f851f">00</span> <span style="color:#1f851f">00</span> <span style="color:#1f851f">00</span> <span style="color:#1f851f">00</span> <span style="color:#1f851f">00</span></div>
<div class="a m" style="left:459px;top:584px"><span style="color:#1f851f">................</span></div>
<div class="a m" style="left:2px;top:595px;color:#000">00000293D0F81230</div>
<div class="a m" style="left:122px;top:595px;word-spacing:0"><span style="color:#1f851f">00</span> <span style="color:#1f851f">00</span> <span style="color:#1f851f">00</span> <span style="color:#1f851f">00</span> <span style="color:#1f851f">00</span> <span style="color:#1f851f">00</span> <span style="color:#1f851f">00</span> <span style="color:#1f851f">00</span> <span style="color:#1f851f">00</span> <span style="color:#1f851f">00</span> <span style="color:#1f851f">00</span> <span style="color:#1f851f">00</span> <span style="color:#1f851f">00</span> <span style="color:#1f851f">00</span> <span style="color:#1f851f">00</span> <span style="color:#1f851f">00</span></div>
<div class="a m" style="left:459px;top:595px"><span style="color:#1f851f">................</span></div>
<div class="a m" style="left:2px;top:606px;color:#000">00000293D0F81240</div>
<div class="a m" style="left:122px;top:606px;word-spacing:0"><span style="color:#1f851f">00</span> <span style="color:#1f851f">00</span> <span style="color:#1f851f">00</span> <span style="color:#1f851f">00</span> <span style="color:#1f851f">00</span> <span style="color:#1f851f">00</span> <span style="color:#1f851f">00</span> <span style="color:#1f851f">00</span> <span style="color:#1f851f">00</span> <span style="color:#1f851f">00</span> <span style="color:#1f851f">00</span> <span style="color:#1f851f">00</span> <span style="color:#1f851f">00</span> <span style="color:#1f851f">00</span> <span style="color:#1f851f">00</span> <span style="color:#1f851f">00</span></div>
<div class="a m" style="left:459px;top:606px"><span style="color:#1f851f">................</span></div>
<div class="a m" style="left:2px;top:617px;color:#000">00000293D0F81250</div>
<div class="a m" style="left:122px;top:617px;word-spacing:0"><span style="color:#1f851f">00</span> <span style="color:#1f851f">00</span> <span style="color:#1f851f">00</span> <span style="color:#1f851f">00</span> <span style="color:#1f851f">00</span> <span style="color:#1f851f">00</span> <span style="color:#1f851f">00</span> <span style="color:#1f851f">00</span> <span style="color:#1f851f">00</span> <span style="color:#1f851f">00</span> <span style="color:#1f851f">00</span> <span style="color:#1f851f">00</span> <span style="color:#1f851f">00</span> <span style="color:#1f851f">00</span> <span style="color:#1f851f">00</span> <span style="color:#1f851f">00</span></div>
<div class="a m" style="left:459px;top:617px"><span style="color:#1f851f">................</span></div>
<div class="a m" style="left:2px;top:628px;color:#000">00000293D0F81260</div>
<div class="a m" style="left:122px;top:628px;word-spacing:0"><span style="color:#1f851f">00</span> <span style="color:#1f851f">00</span> <span style="color:#1f851f">00</span> <span style="color:#1f851f">00</span> <span style="color:#1f851f">00</span> <span style="color:#1f851f">00</span> <span style="color:#1f851f">00</span> <span style="color:#1f851f">00</span> <span style="color:#1f851f">00</span> <span style="color:#1f851f">00</span> <span style="color:#1f851f">00</span> <span style="color:#1f851f">00</span> <span style="color:#1f851f">00</span> <span style="color:#1f851f">00</span> <span style="color:#1f851f">00</span> <span style="color:#1f851f">00</span></div>
<div class="a m" style="left:459px;top:628px"><span style="color:#1f851f">................</span></div>
<div class="a m" style="left:2px;top:639px;color:#000">00000293D0F81270</div>
<div class="a m" style="left:122px;top:639px;word-spacing:0"><span style="color:#1f851f">00</span> <span style="color:#1f851f">00</span> <span style="color:#1f851f">00</span> <span style="color:#1f851f">00</span> <span style="color:#1f851f">00</span> <span style="color:#1f851f">00</span> <span style="color:#1f851f">00</span> <span style="color:#1f851f">00</span> <span style="color:#1f851f">00</span> <span style="color:#1f851f">00</span> <span style="color:#1f851f">00</span> <span style="color:#1f851f">00</span> <span style="color:#1f851f">00</span> <span style="color:#1f851f">00</span> <span style="color:#1f851f">00</span> <span style="color:#1f851f">00</span></div>
<div class="a m" style="left:459px;top:639px"><span style="color:#1f851f">................</span></div>
<div class="a m" style="left:2px;top:650px;color:#000">00000293D0F81280</div>
<div class="a m" style="left:122px;top:650px;word-spacing:0"><span style="color:#1f851f">00</span> <span style="color:#1f851f">00</span> <span style="color:#1f851f">00</span> <span style="color:#1f851f">00</span> <span style="color:#1f851f">00</span> <span style="color:#1f851f">00</span> <span style="color:#1f851f">00</span> <span style="color:#1f851f">00</span> <span style="color:#1f851f">00</span> <span style="color:#1f851f">00</span> <span style="color:#1f851f">00</span> <span style="color:#1f851f">00</span> <span style="color:#1f851f">00</span> <span style="color:#1f851f">00</span> <span style="color:#1f851f">00</span> <span style="color:#1f851f">00</span></div>
<div class="a m" style="left:459px;top:650px"><span style="color:#1f851f">................</span></div>
<div class="a m" style="left:2px;top:661px;color:#000">00000293D0F81290</div>
<div class="a m" style="left:122px;top:661px;word-spacing:0"><span style="color:#1f851f">00</span> <span style="color:#1f851f">00</span> <span style="color:#1f851f">00</span> <span style="color:#1f851f">00</span> <span style="color:#1f851f">00</span> <span style="color:#1f851f">00</span> <span style="color:#1f851f">00</span> <span style="color:#1f851f">00</span> <span style="color:#1f851f">00</span> <span style="color:#1f851f">00</span> <span style="color:#1f851f">00</span> <span style="color:#1f851f">00</span> <span style="color:#1f851f">00</span> <span style="color:#1f851f">00</span> <span style="color:#1f851f">00</span> <span style="color:#1f851f">00</span></div>
<div class="a m" style="left:459px;top:661px"><span style="color:#1f851f">................</span></div>
<div class="a m" style="left:2px;top:672px;color:#000">00000293D0F812A0</div>
<div class="a m" style="left:122px;top:672px;word-spacing:0"><span style="color:#1f851f">00</span> <span style="color:#1f851f">00</span> <span style="color:#1f851f">00</span> <span style="color:#1f851f">00</span> <span style="color:#1f851f">00</span> <span style="color:#1f851f">00</span> <span style="color:#1f851f">00</span> <span style="color:#1f851f">00</span> <span style="color:#1f851f">00</span> <span style="color:#1f851f">00</span> <span style="color:#1f851f">00</span> <span style="color:#1f851f">00</span> <span style="color:#1f851f">00</span> <span style="color:#1f851f">00</span> <span style="color:#1f851f">00</span> <span style="color:#1f851f">00</span></div>
<div class="a m" style="left:459px;top:672px"><span style="color:#1f851f">................</span></div>
<div class="a m" style="left:2px;top:683px;color:#000">00000293D0F812B0</div>
<div class="a m" style="left:122px;top:683px;word-spacing:0"><span style="color:#1f851f">00</span> <span style="color:#1f851f">00</span> <span style="color:#1f851f">00</span> <span style="color:#1f851f">00</span> <span style="color:#1f851f">00</span> <span style="color:#1f851f">00</span> <span style="color:#1f851f">00</span> <span style="color:#1f851f">00</span> <span style="color:#1f851f">00</span> <span style="color:#1f851f">00</span> <span style="color:#1f851f">00</span> <span style="color:#1f851f">00</span> <span style="color:#1f851f">00</span> <span style="color:#1f851f">00</span> <span style="color:#1f851f">00</span> <span style="color:#1f851f">00</span></div>
<div class="a m" style="left:459px;top:683px"><span style="color:#1f851f">................</span></div>
<div class="a m" style="left:2px;top:694px;color:#000">00000293D0F812C0</div>
<div class="a m" style="left:122px;top:694px;word-spacing:0"><span style="color:#1f851f">00</span> <span style="color:#1f851f">00</span> <span style="color:#1f851f">00</span> <span style="color:#1f851f">00</span> <span style="color:#1f851f">00</span> <span style="color:#1f851f">00</span> <span style="color:#1f851f">00</span> <span style="color:#1f851f">00</span> <span style="color:#1f851f">00</span> <span style="color:#1f851f">00</span> <span style="color:#1f851f">00</span> <span style="color:#1f851f">00</span> <span style="color:#1f851f">00</span> <span style="color:#1f851f">00</span> <span style="color:#1f851f">00</span> <span style="color:#1f851f">00</span></div>
<div class="a m" style="left:459px;top:694px"><span style="color:#1f851f">................</span></div>
<div class="a m" style="left:2px;top:705px;color:#000">00000293D0F812D0</div>
<div class="a m" style="left:122px;top:705px;word-spacing:0"><span style="color:#1f851f">00</span> <span style="color:#1f851f">00</span> <span style="color:#1f851f">00</span> <span style="color:#1f851f">00</span> <span style="color:#1f851f">00</span> <span style="color:#1f851f">00</span> <span style="color:#1f851f">00</span> <span style="color:#1f851f">00</span> <span style="color:#1f851f">00</span> <span style="color:#1f851f">00</span> <span style="color:#1f851f">00</span> <span style="color:#1f851f">00</span> <span style="color:#1f851f">00</span> <span style="color:#1f851f">00</span> <span style="color:#1f851f">00</span> <span style="color:#1f851f">00</span></div>
<div class="a m" style="left:459px;top:705px"><span style="color:#1f851f">................</span></div>
<div class="a m" style="left:2px;top:716px;color:#000">00000293D0F812E0</div>
<div class="a m" style="left:122px;top:716px;word-spacing:0"><span style="color:#1f851f">00</span> <span style="color:#1f851f">00</span> <span style="color:#1f851f">00</span> <span style="color:#1f851f">00</span> <span style="color:#1f851f">00</span> <span style="color:#1f851f">00</span> <span style="color:#1f851f">00</span> <span style="color:#1f851f">00</span> <span style="color:#1f851f">00</span> <span style="color:#1f851f">00</span> <span style="color:#1f851f">00</span> <span style="color:#1f851f">00</span> <span style="color:#1f851f">00</span> <span style="color:#1f851f">00</span> <span style="color:#1f851f">00</span> <span style="color:#1f851f">00</span></div>
<div class="a m" style="left:459px;top:716px"><span style="color:#1f851f">................</span></div>
<div class="a m" style="left:2px;top:727px;color:#000">00000293D0F812F0</div>
<div class="a m" style="left:122px;top:727px;word-spacing:0"><span style="color:#1f851f">00</span> <span style="color:#1f851f">00</span> <span style="color:#1f851f">00</span> <span style="color:#1f851f">00</span> <span style="color:#1f851f">00</span> <span style="color:#1f851f">00</span> <span style="color:#1f851f">00</span> <span style="color:#1f851f">00</span> <span style="color:#1f851f">00</span> <span style="color:#1f851f">00</span> <span style="color:#1f851f">00</span> <span style="color:#1f851f">00</span> <span style="color:#1f851f">00</span> <span style="color:#1f851f">00</span> <span style="color:#1f851f">00</span> <span style="color:#1f851f">00</span></div>
<div class="a m" style="left:459px;top:727px"><span style="color:#1f851f">................</span></div>
<div class="a m" style="left:2px;top:738px;color:#000">00000293D0F81300</div>
<div class="a m" style="left:122px;top:738px;word-spacing:0"><span style="color:#1f851f">00</span> <span style="color:#1f851f">00</span> <span style="color:#1f851f">00</span> <span style="color:#1f851f">00</span> <span style="color:#1f851f">00</span> <span style="color:#1f851f">00</span> <span style="color:#1f851f">00</span> <span style="color:#1f851f">00</span> <span style="color:#1f851f">00</span> <span style="color:#1f851f">00</span> <span style="color:#1f851f">00</span> <span style="color:#1f851f">00</span> <span style="color:#1f851f">00</span> <span style="color:#1f851f">00</span> <span style="color:#1f851f">00</span> <span style="color:#1f851f">00</span></div>
<div class="a m" style="left:459px;top:738px"><span style="color:#1f851f">................</span></div>
<div class="a m" style="left:2px;top:749px;color:#000">00000293D0F81310</div>
<div class="a m" style="left:122px;top:749px;word-spacing:0"><span style="color:#1f851f">00</span> <span style="color:#1f851f">00</span> <span style="color:#1f851f">00</span> <span style="color:#1f851f">00</span> <span style="color:#1f851f">00</span> <span style="color:#1f851f">00</span> <span style="color:#1f851f">00</span> <span style="color:#1f851f">00</span> <span style="color:#1f851f">00</span> <span style="color:#1f851f">00</span> <span style="color:#1f851f">00</span> <span style="color:#1f851f">00</span> <span style="color:#1f851f">00</span> <span style="color:#1f851f">00</span> <span style="color:#1f851f">00</span> <span style="color:#1f851f">00</span></div>
<div class="a m" style="left:459px;top:749px"><span style="color:#1f851f">................</span></div>
<div class="a m" style="left:2px;top:760px;color:#000">00000293D0F81320</div>
<div class="a m" style="left:122px;top:760px;word-spacing:0"><span style="color:#1f851f">00</span> <span style="color:#1f851f">00</span> <span style="color:#1f851f">00</span> <span style="color:#1f851f">00</span> <span style="color:#1f851f">00</span> <span style="color:#1f851f">00</span> <span style="color:#1f851f">00</span> <span style="color:#1f851f">00</span> <span style="color:#000">86</span> <span style="color:#000">16</span> <span style="color:#000">D9</span> <span style="color:#000">1C</span> <span style="color:#000">B6</span> <span style="color:#000">F5</span> <span style="color:#1f851f">00</span> <span style="color:#000">10</span></div>
<div class="a m" style="left:459px;top:760px"><span style="color:#1f851f">........</span><span style="color:#000">..Ù.¶õ..</span></div>
<div class="a m" style="left:2px;top:771px;color:#000">00000293D0F81330</div>
<div class="a m" style="left:122px;top:771px;word-spacing:0"><span style="color:#1f851f">00</span> <span style="color:#1f851f">00</span> <span style="color:#1f851f">00</span> <span style="color:#1f851f">00</span> <span style="color:#1f851f">00</span> <span style="color:#1f851f">00</span> <span style="color:#1f851f">00</span> <span style="color:#1f851f">00</span> <span style="color:#1f851f">00</span> <span style="color:#1f851f">00</span> <span style="color:#1f851f">00</span> <span style="color:#1f851f">00</span> <span style="color:#1f851f">00</span> <span style="color:#1f851f">00</span> <span style="color:#1f851f">00</span> <span style="color:#1f851f">00</span></div>
<div class="a m" style="left:459px;top:771px"><span style="color:#1f851f">................</span></div>
<div class="a m" style="left:2px;top:782px;color:#000">00000293D0F81340</div>
<div class="a m" style="left:122px;top:782px;word-spacing:0"><span style="color:#1f851f">00</span> <span style="color:#1f851f">00</span> <span style="color:#1f851f">00</span> <span style="color:#1f851f">00</span> <span style="color:#1f851f">00</span> <span style="color:#1f851f">00</span> <span style="color:#1f851f">00</span> <span style="color:#1f851f">00</span> <span style="color:#1f851f">00</span> <span style="color:#1f851f">00</span> <span style="color:#1f851f">00</span> <span style="color:#1f851f">00</span> <span style="color:#1f851f">00</span> <span style="color:#1f851f">00</span> <span style="color:#1f851f">00</span> <span style="color:#1f851f">00</span></div>
<div class="a m" style="left:459px;top:782px"><span style="color:#1f851f">................</span></div>
<div class="a m" style="left:2px;top:793px;color:#000">00000293D0F81350</div>
<div class="a m" style="left:122px;top:793px;word-spacing:0"><span style="color:#1f851f">00</span> <span style="color:#1f851f">00</span> <span style="color:#1f851f">00</span> <span style="color:#1f851f">00</span> <span style="color:#1f851f">00</span> <span style="color:#1f851f">00</span> <span style="color:#1f851f">00</span> <span style="color:#1f851f">00</span> <span style="color:#1f851f">00</span> <span style="color:#1f851f">00</span> <span style="color:#1f851f">00</span> <span style="color:#1f851f">00</span> <span style="color:#1f851f">00</span> <span style="color:#1f851f">00</span> <span style="color:#1f851f">00</span> <span style="color:#1f851f">00</span></div>
<div class="a m" style="left:459px;top:793px"><span style="color:#1f851f">................</span></div>
<div class="a m" style="left:2px;top:804px;color:#000">00000293D0F81360</div>
<div class="a m" style="left:122px;top:804px;word-spacing:0"><span style="color:#1f851f">00</span> <span style="color:#1f851f">00</span> <span style="color:#1f851f">00</span> <span style="color:#1f851f">00</span> <span style="color:#1f851f">00</span> <span style="color:#1f851f">00</span> <span style="color:#1f851f">00</span> <span style="color:#1f851f">00</span> <span style="color:#1f851f">00</span> <span style="color:#1f851f">00</span> <span style="color:#1f851f">00</span> <span style="color:#1f851f">00</span> <span style="color:#1f851f">00</span> <span style="color:#1f851f">00</span> <span style="color:#1f851f">00</span> <span style="color:#1f851f">00</span></div>
<div class="a m" style="left:459px;top:804px"><span style="color:#1f851f">................</span></div>
<div class="a m" style="left:2px;top:815px;color:#000">00000293D0F81370</div>
<div class="a m" style="left:122px;top:815px;word-spacing:0"><span style="color:#1f851f">00</span> <span style="color:#1f851f">00</span> <span style="color:#1f851f">00</span> <span style="color:#1f851f">00</span> <span style="color:#1f851f">00</span> <span style="color:#1f851f">00</span> <span style="color:#1f851f">00</span> <span style="color:#1f851f">00</span> <span style="color:#1f851f">00</span> <span style="color:#1f851f">00</span> <span style="color:#1f851f">00</span> <span style="color:#1f851f">00</span> <span style="color:#1f851f">00</span> <span style="color:#1f851f">00</span> <span style="color:#1f851f">00</span> <span style="color:#1f851f">00</span></div>
<div class="a m" style="left:459px;top:815px"><span style="color:#1f851f">................</span></div>
<div class="a m" style="left:2px;top:826px;color:#000">00000293D0F81380</div>
<div class="a m" style="left:122px;top:826px;word-spacing:0"><span style="color:#1f851f">00</span> <span style="color:#1f851f">00</span> <span style="color:#1f851f">00</span> <span style="color:#1f851f">00</span> <span style="color:#1f851f">00</span> <span style="color:#1f851f">00</span> <span style="color:#1f851f">00</span> <span style="color:#1f851f">00</span> <span style="color:#1f851f">00</span> <span style="color:#1f851f">00</span> <span style="color:#1f851f">00</span> <span style="color:#1f851f">00</span> <span style="color:#1f851f">00</span> <span style="color:#1f851f">00</span> <span style="color:#1f851f">00</span> <span style="color:#1f851f">00</span></div>
<div class="a m" style="left:459px;top:826px"><span style="color:#1f851f">................</span></div>
<div class="a" style="left:0;top:833px;width:1132px;height:3px;background:#f0f0f0;border-top:1px solid #8a8a8a"></div>
<div class="a" style="left:624px;top:206px;width:520px;height:512px;box-shadow:0 4px 18px rgba(0,0,0,0.28)"></div>
<div class="a" style="left:624px;top:206px;width:520px;height:512px;background:#0c0c0c;border:1px solid #5a5a5a"></div>
<div class="a" style="left:625px;top:207px;width:520px;height:30px;background:#fff"></div>
<svg class="a" style="left:633px;top:215px" width="16" height="13" viewBox="0 0 16 13"><rect x="0.5" y="0.5" width="15" height="12" fill="#000" stroke="#777"/><rect x="1" y="1" width="14" height="2" fill="#bbb"/><text x="1.5" y="10" font-family="Liberation Mono" font-weight="bold" font-size="5.5" fill="#fff">C:\_</text></svg>
<div class="a s" style="left:654.5px;top:215px;font-size:12px;line-height:15px;color:#000;letter-spacing:-0.14px">Select C:\Windows\System32\cmd.exe - .\LocalShellcodeExec.exe</div>
<div class="a" style="left:625px;top:239px;font-family:'Liberation Mono', monospace;font-size:13.33px;line-height:16px;color:#cccccc;white-space:pre">Microsoft Windows [Version 10.0.19044.5371]
(c) Microsoft Corporation. All rights reserved.

C:\Users\MaldevUser\Desktop\Module-Code\Module-27\Local-ShellcodeExec
.exe
[i] Injecting Shellcode The Local Process Of Pid: 7672
[#] Press &lt;Enter&gt; To Decrypt ...
[i] Decrypting ...[+] DONE !
[i] Deobfuscated Payload At : <span style="background:#f2f2f2;color:#0c0c0c;display:inline-block;height:15px;vertical-align:top;position:relative;top:-2px;padding-top:2px">0x00000293D0F81210 </span>Of Size : 272
[#] Press &lt;Enter&gt; To Allocate ...
[i] Allocated Memory At : 0x00000293D0F20000
[#] Press &lt;Enter&gt; To Write Payload ...
[#] Press &lt;Enter&gt; To Run ... <span style="display:inline-block;width:8px;height:4px;background:#ddd;vertical-align:-2px"></span></div>
</body></html>
